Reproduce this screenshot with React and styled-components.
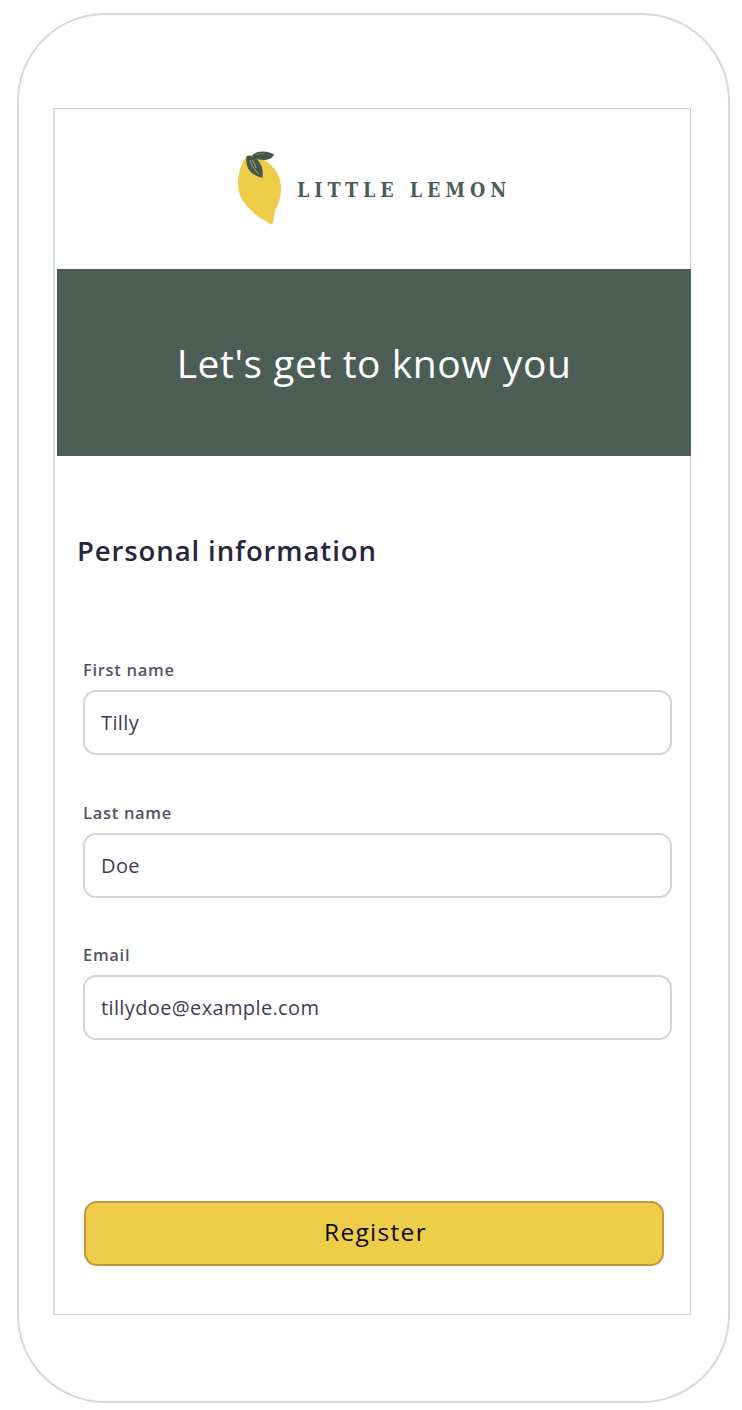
import React from "react";
import styled, { createGlobalStyle } from "styled-components";

const GlobalStyle = createGlobalStyle`
  * { box-sizing: border-box; }
  body {
    margin: 0;
    background: #fff;
    font-family: "Open Sans", "Noto Sans", sans-serif;
  }
`;

const Page = styled.div`
  height: 1410px;
  padding: 13px 12px 7px 17px;
`;

const Phone = styled.div`
  height: 1390px;
  padding: 93px 37px 86px 34px;
  border: 2px solid #d9d9d9;
  border-radius: 88px;
`;

const Screen = styled.main`
  height: 1207px;
  display: flex;
  flex-direction: column;
  border: 1px solid #c9d1d9;
  border-left: 2px solid #dbe0e4;
`;

const Header = styled.header`
  height: 160px;
  flex: none;
  display: flex;
  align-items: center;
  padding-left: 182px;
  gap: 14px;
`;

const LemonMark = styled.svg`
  width: 46px;
  height: 78px;
  flex: none;
`;

const BrandName = styled.span`
  font: bold 19.5px/24px "DejaVu Serif Condensed", "DejaVu Serif", serif;
  font-stretch: condensed;
  letter-spacing: 5px;
  color: #495e57;
  white-space: nowrap;
  margin-top: 4px;
`;

const Banner = styled.section`
  height: 187px;
  flex: none;
  margin: 0 -1px 0 2px;
  display: flex;
  justify-content: center;
  background: #4c5d56;
`;

const BannerTitle = styled.h1`
  margin: 68px 0 0;
  font-size: 39px;
  font-weight: 400;
  line-height: 52px;
  letter-spacing: 0.55px;
  color: #fff;
  white-space: nowrap;
`;

const Form = styled.form`
  display: flex;
  flex-direction: column;
  padding: 76px 18.5px 0 28px;
`;

const SectionTitle = styled.h2`
  margin: 0 0 86px -6px;
  font-size: 27.5px;
  font-weight: 600;
  line-height: 38px;
  letter-spacing: 0.9px;
  color: #27263d;
`;

const Field = styled.label`
  display: flex;
  flex-direction: column;
  height: 142.5px;
`;

const FieldLabel = styled.span`
  height: 34px;
  font-size: 16.5px;
  font-weight: 600;
  line-height: 28px;
  letter-spacing: 0.7px;
  color: #555466;
`;

const TextInput = styled.input`
  width: 100%;
  height: 65px;
  padding: 0 16px;
  border: 2px solid #d3d3dc;
  border-radius: 13px;
  outline: none;
  background: #fff;
  font: 400 20px/28px "Open Sans", "Noto Sans", sans-serif;
  letter-spacing: 0.37px;
  color: #3f3d56;
`;

const RegisterButton = styled.button`
  width: 580px;
  height: 65px;
  margin: 117.5px 0 0 1px;
  padding: 0 0 3px 3px;
  border: 2px solid #ca9344;
  border-radius: 13px;
  background: #eecd48;
  font: 400 24.5px/34px "Open Sans", "Noto Sans", sans-serif;
  letter-spacing: 1.3px;
  color: #0b0b05;
`;

const fields = [
  { label: "First name", value: "Tilly" },
  { label: "Last name", value: "Doe" },
  { label: "Email", value: "tillydoe@example.com" },
];

function Lemon() {
  return (
    <LemonMark viewBox="0 0 46 78" aria-hidden="true">
      <path
        d="M8 8C10 4 18 5 23 8C34 13 43 22 44 36C44.500 45 42 54 38.500 60C37 64 37 68 36 72Q35 75.500 33 74C28 70 21 68 16 62C7 54 1 46 1 34C1 24 4 14 8 8Z"
        fill="#edcc48"
      />
      <path
        d="M10 6C15 5 20 8 23 13C26 18 26 23 25.500 28C20 26 14 24 11.500 19C9.500 15 8.500 10 10 6Z"
        fill="#41574e"
      />
      <path d="M13 10C14 14 17 20 22 24M15 10C17 12 18 15 19 18" fill="none" stroke="#c3b950" strokeWidth="0.9" />
      <path d="M15.500 5C19 0.500 31 0.500 37 4.500C35 10 26 12 15.500 7.500Z" fill="#41574e" />
      <path d="M18 4.500L27 3.500" stroke="#7b8d80" strokeWidth="0.8" />
    </LemonMark>
  );
}

export default function App() {
  return (
    <>
      <GlobalStyle />
      <Page>
        <Phone>
          <Screen>
            <Header>
              <Lemon />
              <BrandName>LITTLE LEMON</BrandName>
            </Header>
            <Banner>
              <BannerTitle>Let's get to know you</BannerTitle>
            </Banner>
            <Form>
              <SectionTitle>Personal information</SectionTitle>
              {fields.map(({ label, value }) => (
                <Field key={label}>
                  <FieldLabel>{label}</FieldLabel>
                  <TextInput defaultValue={value} />
                </Field>
              ))}
              <RegisterButton type="button">Register</RegisterButton>
            </Form>
          </Screen>
        </Phone>
      </Page>
    </>
  );
}
